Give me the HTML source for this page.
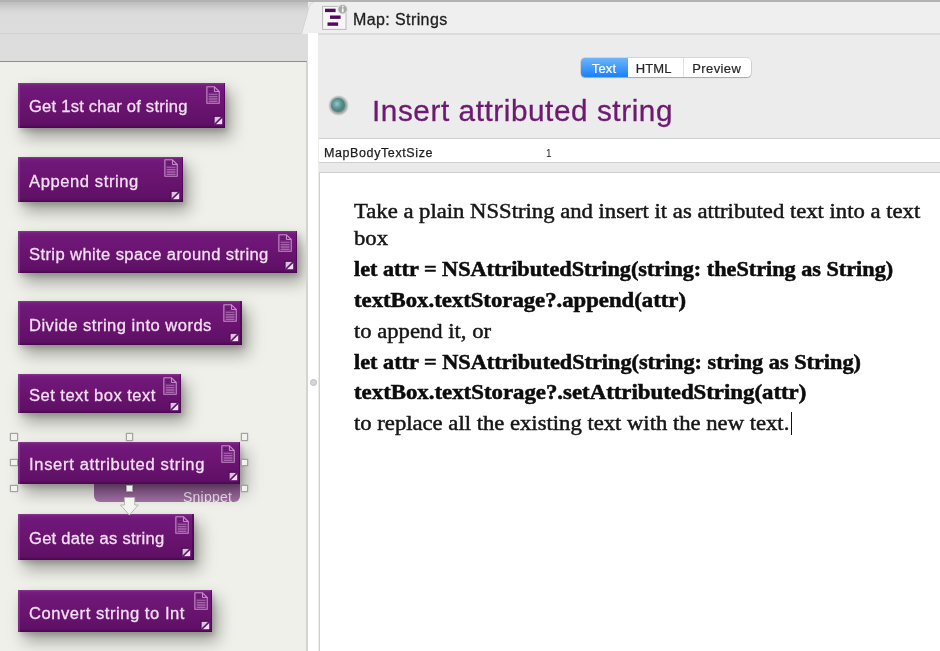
<!DOCTYPE html>
<html>
<head>
<meta charset="utf-8">
<title>Map: Strings</title>
<style>
html,body{margin:0;padding:0;}
body{width:940px;height:651px;overflow:hidden;position:relative;background:#ececec;font-family:"Liberation Sans",sans-serif;-webkit-font-smoothing:antialiased;}
.serif,.note span,#title,#rowk,#rowv,#tabtitle,#seg div,#snip span{will-change:transform;}
.abs{position:absolute;}
/* left pane */
#lefthead{left:0;top:0;width:308px;height:61px;background:linear-gradient(#b6b6b6 0px,#c0c0c0 3px,#d3d3d3 9px,#dcdcdc 15px,#dddddd 61px);}
#leftline1{left:0;top:33px;width:302px;height:1px;background:#d3d3d3;}
#leftline2{left:0;top:61px;width:307px;height:1px;background:#8e8e8e;}
#map{left:0;top:62px;width:306px;height:589px;background:#f0f0eb;overflow:hidden;}
#mapedge{left:306px;top:62px;width:1.7px;height:589px;background:#d3d3d1;}
#strip{left:308px;top:33px;width:10px;height:618px;background:#ffffff;}
#grip{left:309.6px;top:378.5px;width:5px;height:5px;border-radius:50%;background:#d6d6d6;border:0.8px solid #bdbdbd;}
/* right pane */
#topline{left:0;top:0;width:940px;height:2px;background:#b2b2b2;}
#tabline{left:318px;top:33px;width:622px;height:1.5px;background:#dcdcdc;}
#tabtitle{left:353px;top:10.46px;font-size:16px;line-height:20px;color:#1e1e1e;letter-spacing:0.4px;-webkit-text-stroke:0.3px #1e1e1e;white-space:nowrap;}
/* segmented control */
#seg{left:580.7px;top:58.3px;width:170.8px;height:19.2px;border-radius:4px;background:#ffffff;box-shadow:0 0 0 0.5px rgba(0,0,0,0.18),0 1px 1px rgba(0,0,0,0.22);}
#seg div{position:absolute;top:0;height:19.2px;-webkit-text-stroke:0.2px;font-size:13px;line-height:21.2px;text-align:center;color:#262626;box-sizing:border-box;letter-spacing:0.15px;}
#seg .s1{left:0;width:47.3px;padding-right:1.2px;border-radius:4px 0 0 4px;background:linear-gradient(#6db4fb,#1b80fb);color:#fff;}
#seg .s2{left:47.3px;width:56px;padding-right:3.6px;border-right:1px solid #e2e2e2;}
#seg .s3{left:103.3px;width:67.5px;padding-right:2px;letter-spacing:0.4px;}
/* title */
#ball{left:327.6px;top:94.8px;width:21.2px;height:21.2px;border-radius:50%;background:radial-gradient(circle closest-side at 50% 50%,#86a3a3 0,#7d9797 60%,#959d9d 68%,#aeb2b2 78%,#cfd1d1 90%,rgba(228,228,228,0) 100%);}#ball:after{content:"";position:absolute;left:3.6px;top:3.6px;width:14px;height:14px;border-radius:50%;background:radial-gradient(circle farthest-side at 42% 42%,#9ccccb 0,#7fb5b4 20%,#5f9a99 50%,#4f8685 75%,#557e7d 100%);}
#title{left:372.2px;top:91.25px;font-size:29px;line-height:40px;color:#6d1a70;letter-spacing:0.55px;transform:scaleX(1.025);transform-origin:0 0;-webkit-text-stroke:0.3px #6d1a70;white-space:nowrap;}
/* attribute row */
#row{left:319px;top:138px;width:621px;height:23px;background:#fff;border-top:1px solid #cfcfcf;border-bottom:1px solid #cfcfcf;}
#rowk{left:324px;top:142.6px;font-size:12.5px;line-height:20px;letter-spacing:0.6px;color:#1c1c1c;-webkit-text-stroke:0.25px #1c1c1c;white-space:nowrap;}
#rowv{left:546px;top:144px;font-size:10px;line-height:20px;color:#1c1c1c;}
#text{left:318.5px;top:171.5px;width:621px;height:479px;background:#fff;border-top:1px solid #cdcdcd;border-left:1.5px solid #d0d0d0;}
#caret{left:790.5px;top:411.5px;width:1.3px;height:23.5px;background:#111;}
.note{position:absolute;left:18px;background:linear-gradient(#8b3790 0px,#761d7c 2px,#70187a 6px,#6a1470 50%,#5f1066 calc(100% - 3.5px),#540c59 calc(100% - 1.5px),#430848 100%);box-shadow:6px 9px 16px rgba(20,20,10,0.36),2px 3px 5px rgba(0,0,0,0.16);}
.note:before{content:"";position:absolute;left:0;top:0;bottom:0;width:1.5px;background:rgba(140,70,150,0.55);}
.note:after{content:"";position:absolute;right:0;top:0;bottom:0;width:1.5px;background:rgba(60,5,65,0.55);}
.note span{position:absolute;left:10.8px;color:#f3dff3;font-size:16px;white-space:nowrap;line-height:20px;-webkit-text-stroke:0.3px #f3dff3;transform-origin:0 0;}
.note .doc{position:absolute;right:4.6px;top:2.6px;}
.note .bdg{position:absolute;right:2.6px;bottom:2.6px;}
.serif{font-family:"Liberation Serif",serif;color:#161616;-webkit-text-stroke:0.45px #161616;white-space:nowrap;position:absolute;left:354.3px;font-size:20px;line-height:26px;transform-origin:0 0;}
.b{font-weight:bold;color:#0c0c0c;-webkit-text-stroke:0.5px #0c0c0c;}
.h{position:absolute;width:5.4px;height:5.4px;background:#f1f1ef;border:0.8px solid #a2a29e;box-shadow:0 0 1.5px rgba(0,0,0,0.25);margin:0.5px;}
#snip{left:94px;top:483.6px;width:146px;height:18.6px;border-radius:0 0 6px 6px;background:linear-gradient(rgba(112,38,120,0.78),rgba(118,45,126,0.64));overflow:hidden;}
#snip span{position:absolute;left:89.3px;top:5.5px;font-size:14px;line-height:16px;color:rgba(255,255,255,0.86);letter-spacing:0.25px;}
</style>
</head>
<body>
<div class="abs" id="lefthead"></div>
<div class="abs" id="leftline1"></div>
<svg class="abs" style="left:296px;top:0" width="30" height="34" viewBox="0 0 30 34"><path d="M5.5 34 L13.2 6.5 Q14 3 17.5 2.5 L30 2.5 L30 34 Z" fill="#efefef"/><path d="M5.5 34 L13.2 6.5 Q14 3 17.5 2.5" fill="none" stroke="#cfcfcf" stroke-width="0.8"/></svg>
<div class="abs" style="left:326px;top:2px;width:614px;height:31px;background:#efefef"></div>
<div class="abs" id="topline"></div>
<div class="abs" id="map">
</div>
<div class="abs" id="leftline2"></div>
<div class="abs" id="mapedge"></div>
<div class="abs" id="strip"></div>
<div class="abs" id="grip"></div>
<div class="abs" id="tabline"></div>
<!-- tab icon -->
<svg class="abs" style="left:320px;top:2px" width="32" height="30" viewBox="0 0 32 30"><rect x="2.6" y="4.4" width="23.4" height="23" fill="#f7f7f7" stroke="#b9b9b9" stroke-width="1"/><rect x="5" y="6.7" width="10.6" height="3.4" fill="#520b59"/><rect x="10" y="13.5" width="10.6" height="3.4" fill="#520b59"/><rect x="7.5" y="20.4" width="10.6" height="3.4" fill="#520b59"/><circle cx="22.6" cy="7.2" r="4.9" fill="#a9a9a9" stroke="#e6e6e6" stroke-width="1.2"/><rect x="22" y="6.4" width="1.5" height="3.8" fill="#fff"/><rect x="22" y="3.9" width="1.5" height="1.5" fill="#fff"/></svg>
<div class="abs" id="tabtitle">Map: Strings</div>
<div class="abs" id="seg"><div class="s1">Text</div><div class="s2">HTML</div><div class="s3">Preview</div></div>
<div class="abs" id="ball"></div>
<div class="abs" id="title">Insert attributed string</div>
<div class="abs" style="left:319px;top:163px;width:621px;height:9px;background:#eaeaea"></div>
<div class="abs" id="row"></div>
<div class="abs" id="rowk">MapBodyTextSize</div>
<div class="abs" id="rowv">1</div>
<div class="abs" id="text"></div>
<div class="serif" style="top:198.25px;transform:scaleX(1.1333)">Take a plain NSString and insert it as attributed text into a text</div>
<div class="serif" style="top:224.55px;transform:scaleX(1.1330)">box</div>
<div class="serif b" style="top:256.45px;transform:scaleX(1.1106)">let attr = NSAttributedString(string: theString as String)</div>
<div class="serif b" style="top:287.25px;transform:scaleX(1.1362)">textBox.textStorage?.append(attr)</div>
<div class="serif" style="top:317.95px;transform:scaleX(1.1313)">to append it, or</div>
<div class="serif b" style="top:348.85px;transform:scaleX(1.1131)">let attr = NSAttributedString(string: string as String)</div>
<div class="serif b" style="top:379.25px;transform:scaleX(1.1407)">textBox.textStorage?.setAttributedString(attr)</div>
<div class="serif" style="top:410.45px;transform:scaleX(1.1327)">to replace all the existing text with the new text.</div>
<div class="abs" id="caret"></div>
<!-- map notes -->
<div class="abs" style="left:0;top:62px;width:306px;height:589px;overflow:hidden"><div style="position:absolute;left:0;top:-62px;width:306px;height:651px">
<div class="abs" id="snip"><span>Snippet</span></div>
<div class="note" style="top:83.0px;width:207.2px;height:44.5px;"><span style="top:13.66px;letter-spacing:0.221px;transform:scaleX(1.035)">Get 1st char of string</span><svg class="doc" width="14.2" height="18" viewBox="0 0 15 19"><path d="M0.9 0.8H9L14 5.8V18.2H0.9Z" fill="#7a2f80" fill-opacity="0.35" stroke="#c48fc8" stroke-width="1.15" stroke-linejoin="round"/><path d="M9 0.8V5.8H14" fill="none" stroke="#c893cc" stroke-width="1"/><path d="M2.8 8.7H12.2M2.8 11H12.2M2.8 12.9H12.2M2.8 14.6H12.2M2.8 16.3H12.2" stroke="#bd8ac2" stroke-width="0.8"/><path d="M2.8 3.6H7M2.8 5.8H7" stroke="#5e1764" stroke-width="1.3"/></svg><svg class="bdg" width="10" height="10" viewBox="0 0 10 10"><rect x="0.2" y="0.4" width="8.6" height="8.4" fill="#470d4d" opacity="0.6"/><path d="M1.8 1.9H9.2V9.2H1.8Z" fill="#f1dff6"/><path d="M1.8 1.9H9.2L1.8 9.2Z" fill="#dcbfe4"/><path d="M1.8 9.2L9.2 1.9" stroke="#571561" stroke-width="1.6"/></svg></div>
<div class="note" style="top:156.5px;width:165.0px;height:45.8px;"><span style="top:15.96px;letter-spacing:0.575px;transform:scaleX(1.035)">Append string</span><svg class="doc" width="14.2" height="18" viewBox="0 0 15 19"><path d="M0.9 0.8H9L14 5.8V18.2H0.9Z" fill="#7a2f80" fill-opacity="0.35" stroke="#c48fc8" stroke-width="1.15" stroke-linejoin="round"/><path d="M9 0.8V5.8H14" fill="none" stroke="#c893cc" stroke-width="1"/><path d="M2.8 8.7H12.2M2.8 11H12.2M2.8 12.9H12.2M2.8 14.6H12.2M2.8 16.3H12.2" stroke="#bd8ac2" stroke-width="0.8"/><path d="M2.8 3.6H7M2.8 5.8H7" stroke="#5e1764" stroke-width="1.3"/></svg><svg class="bdg" width="10" height="10" viewBox="0 0 10 10"><rect x="0.2" y="0.4" width="8.6" height="8.4" fill="#470d4d" opacity="0.6"/><path d="M1.8 1.9H9.2V9.2H1.8Z" fill="#f1dff6"/><path d="M1.8 1.9H9.2L1.8 9.2Z" fill="#dcbfe4"/><path d="M1.8 9.2L9.2 1.9" stroke="#571561" stroke-width="1.6"/></svg></div>
<div class="note" style="top:231.3px;width:279.0px;height:41.5px;"><span style="top:13.26px;letter-spacing:0.384px;transform:scaleX(1.035)">Strip white space around string</span><svg class="doc" width="14.2" height="18" viewBox="0 0 15 19"><path d="M0.9 0.8H9L14 5.8V18.2H0.9Z" fill="#7a2f80" fill-opacity="0.35" stroke="#c48fc8" stroke-width="1.15" stroke-linejoin="round"/><path d="M9 0.8V5.8H14" fill="none" stroke="#c893cc" stroke-width="1"/><path d="M2.8 8.7H12.2M2.8 11H12.2M2.8 12.9H12.2M2.8 14.6H12.2M2.8 16.3H12.2" stroke="#bd8ac2" stroke-width="0.8"/><path d="M2.8 3.6H7M2.8 5.8H7" stroke="#5e1764" stroke-width="1.3"/></svg><svg class="bdg" width="10" height="10" viewBox="0 0 10 10"><rect x="0.2" y="0.4" width="8.6" height="8.4" fill="#470d4d" opacity="0.6"/><path d="M1.8 1.9H9.2V9.2H1.8Z" fill="#f1dff6"/><path d="M1.8 1.9H9.2L1.8 9.2Z" fill="#dcbfe4"/><path d="M1.8 9.2L9.2 1.9" stroke="#571561" stroke-width="1.6"/></svg></div>
<div class="note" style="top:301.2px;width:223.7px;height:43.9px;"><span style="top:15.06px;letter-spacing:0.471px;transform:scaleX(1.035)">Divide string into words</span><svg class="doc" width="14.2" height="18" viewBox="0 0 15 19"><path d="M0.9 0.8H9L14 5.8V18.2H0.9Z" fill="#7a2f80" fill-opacity="0.35" stroke="#c48fc8" stroke-width="1.15" stroke-linejoin="round"/><path d="M9 0.8V5.8H14" fill="none" stroke="#c893cc" stroke-width="1"/><path d="M2.8 8.7H12.2M2.8 11H12.2M2.8 12.9H12.2M2.8 14.6H12.2M2.8 16.3H12.2" stroke="#bd8ac2" stroke-width="0.8"/><path d="M2.8 3.6H7M2.8 5.8H7" stroke="#5e1764" stroke-width="1.3"/></svg><svg class="bdg" width="10" height="10" viewBox="0 0 10 10"><rect x="0.2" y="0.4" width="8.6" height="8.4" fill="#470d4d" opacity="0.6"/><path d="M1.8 1.9H9.2V9.2H1.8Z" fill="#f1dff6"/><path d="M1.8 1.9H9.2L1.8 9.2Z" fill="#dcbfe4"/><path d="M1.8 9.2L9.2 1.9" stroke="#571561" stroke-width="1.6"/></svg></div>
<div class="note" style="top:374.4px;width:163.4px;height:38.8px;"><span style="top:11.66px;letter-spacing:0.458px;transform:scaleX(1.035)">Set text box text</span><svg class="doc" width="14.2" height="18" viewBox="0 0 15 19"><path d="M0.9 0.8H9L14 5.8V18.2H0.9Z" fill="#7a2f80" fill-opacity="0.35" stroke="#c48fc8" stroke-width="1.15" stroke-linejoin="round"/><path d="M9 0.8V5.8H14" fill="none" stroke="#c893cc" stroke-width="1"/><path d="M2.8 8.7H12.2M2.8 11H12.2M2.8 12.9H12.2M2.8 14.6H12.2M2.8 16.3H12.2" stroke="#bd8ac2" stroke-width="0.8"/><path d="M2.8 3.6H7M2.8 5.8H7" stroke="#5e1764" stroke-width="1.3"/></svg><svg class="bdg" width="10" height="10" viewBox="0 0 10 10"><rect x="0.2" y="0.4" width="8.6" height="8.4" fill="#470d4d" opacity="0.6"/><path d="M1.8 1.9H9.2V9.2H1.8Z" fill="#f1dff6"/><path d="M1.8 1.9H9.2L1.8 9.2Z" fill="#dcbfe4"/><path d="M1.8 9.2L9.2 1.9" stroke="#571561" stroke-width="1.6"/></svg></div>
<div class="note sel" style="top:442.2px;width:222.1px;height:41.4px;"><span style="top:13.16px;letter-spacing:0.642px;transform:scaleX(1.035)">Insert attributed string</span><svg class="doc" width="14.2" height="18" viewBox="0 0 15 19"><path d="M0.9 0.8H9L14 5.8V18.2H0.9Z" fill="#7a2f80" fill-opacity="0.35" stroke="#c48fc8" stroke-width="1.15" stroke-linejoin="round"/><path d="M9 0.8V5.8H14" fill="none" stroke="#c893cc" stroke-width="1"/><path d="M2.8 8.7H12.2M2.8 11H12.2M2.8 12.9H12.2M2.8 14.6H12.2M2.8 16.3H12.2" stroke="#bd8ac2" stroke-width="0.8"/><path d="M2.8 3.6H7M2.8 5.8H7" stroke="#5e1764" stroke-width="1.3"/></svg><svg class="bdg" width="10" height="10" viewBox="0 0 10 10"><rect x="0.2" y="0.4" width="8.6" height="8.4" fill="#470d4d" opacity="0.6"/><path d="M1.8 1.9H9.2V9.2H1.8Z" fill="#f1dff6"/><path d="M1.8 1.9H9.2L1.8 9.2Z" fill="#dcbfe4"/><path d="M1.8 9.2L9.2 1.9" stroke="#571561" stroke-width="1.6"/></svg></div>
<div class="note" style="top:513.8px;width:175.6px;height:46.2px;"><span style="top:15.26px;letter-spacing:0.255px;transform:scaleX(1.035)">Get date as string</span><svg class="doc" width="14.2" height="18" viewBox="0 0 15 19"><path d="M0.9 0.8H9L14 5.8V18.2H0.9Z" fill="#7a2f80" fill-opacity="0.35" stroke="#c48fc8" stroke-width="1.15" stroke-linejoin="round"/><path d="M9 0.8V5.8H14" fill="none" stroke="#c893cc" stroke-width="1"/><path d="M2.8 8.7H12.2M2.8 11H12.2M2.8 12.9H12.2M2.8 14.6H12.2M2.8 16.3H12.2" stroke="#bd8ac2" stroke-width="0.8"/><path d="M2.8 3.6H7M2.8 5.8H7" stroke="#5e1764" stroke-width="1.3"/></svg><svg class="bdg" width="10" height="10" viewBox="0 0 10 10"><rect x="0.2" y="0.4" width="8.6" height="8.4" fill="#470d4d" opacity="0.6"/><path d="M1.8 1.9H9.2V9.2H1.8Z" fill="#f1dff6"/><path d="M1.8 1.9H9.2L1.8 9.2Z" fill="#dcbfe4"/><path d="M1.8 9.2L9.2 1.9" stroke="#571561" stroke-width="1.6"/></svg></div>
<div class="note" style="top:589.9px;width:194.4px;height:42.3px;"><span style="top:13.86px;letter-spacing:0.527px;transform:scaleX(1.035)">Convert string to Int</span><svg class="doc" width="14.2" height="18" viewBox="0 0 15 19"><path d="M0.9 0.8H9L14 5.8V18.2H0.9Z" fill="#7a2f80" fill-opacity="0.35" stroke="#c48fc8" stroke-width="1.15" stroke-linejoin="round"/><path d="M9 0.8V5.8H14" fill="none" stroke="#c893cc" stroke-width="1"/><path d="M2.8 8.7H12.2M2.8 11H12.2M2.8 12.9H12.2M2.8 14.6H12.2M2.8 16.3H12.2" stroke="#bd8ac2" stroke-width="0.8"/><path d="M2.8 3.6H7M2.8 5.8H7" stroke="#5e1764" stroke-width="1.3"/></svg><svg class="bdg" width="10" height="10" viewBox="0 0 10 10"><rect x="0.2" y="0.4" width="8.6" height="8.4" fill="#470d4d" opacity="0.6"/><path d="M1.8 1.9H9.2V9.2H1.8Z" fill="#f1dff6"/><path d="M1.8 1.9H9.2L1.8 9.2Z" fill="#dcbfe4"/><path d="M1.8 9.2L9.2 1.9" stroke="#571561" stroke-width="1.6"/></svg></div>
<svg class="abs" style="left:118px;top:495px" width="24" height="22" viewBox="0 0 24 22"><path d="M6.5 2.5H16.7V10H20.3L11.4 20L2.5 10H6.5Z" fill="#f4f4f2" stroke="#b5b5b0" stroke-width="1" stroke-linejoin="round"/></svg>
<div class="h" style="left:9.8px;top:432.9px"></div>
<div class="h" style="left:125.2px;top:432.9px"></div>
<div class="h" style="left:240px;top:432.9px"></div>
<div class="h" style="left:9.8px;top:458.3px"></div>
<div class="h" style="left:240px;top:458.3px"></div>
<div class="h" style="left:9.8px;top:484.6px"></div>
<div class="h" style="left:125.2px;top:484.6px"></div>
<div class="h" style="left:240px;top:484.6px"></div>
</div></div>
</body>
</html>
